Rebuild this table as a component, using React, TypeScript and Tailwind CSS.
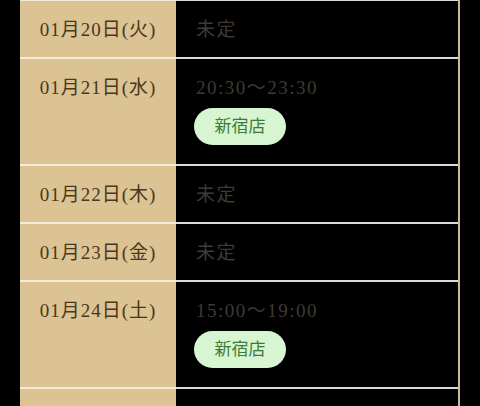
const rows = [
  { date: '01月20日(火)', time: '未定' },
  { date: '01月21日(水)', time: '20:30〜23:30', shop: '新宿店' },
  { date: '01月22日(木)', time: '未定' },
  { date: '01月23日(金)', time: '未定' },
  { date: '01月24日(土)', time: '15:00〜19:00', shop: '新宿店' },
  { date: '01月25日(日)', time: '未定' },
]

const font = { fontFamily: '"Liberation Serif", "Noto Sans CJK JP", serif' }

export default function App() {
  return (
    <div className="w-[480px] h-[406px] overflow-hidden bg-black" style={font}>
      <div className="ml-[20px] w-[440px] border-r-2 border-[#cdb994] -mt-[1px]">
        {rows.map((row, i) => (
          <div key={i} className="flex">
            <div className="w-[156px] shrink-0 bg-[#dbc393] border-t-2 border-[#f4ecda] pt-[18px] pb-[16px] text-center text-[19px] leading-[22px] tracking-[1px] text-[#4a381c]">
              {row.date}
            </div>
            <div className="flex-1 border-t-2 border-[#dadada] pl-[20px] pt-[18px] pb-[16px]">
              <p className="text-[19px] leading-[22px] tracking-[1.5px] text-[#3e3a34]">{row.time}</p>
              {row.shop && (
                <div className="mt-[9px] mb-[3px] -ml-[2px] w-[92px] h-[37px] rounded-full bg-[#d6f5d0] flex items-center justify-center text-[17px] text-[#3f7a38]">
                  {row.shop}
                </div>
              )}
            </div>
          </div>
        ))}
      </div>
    </div>
  )
}
